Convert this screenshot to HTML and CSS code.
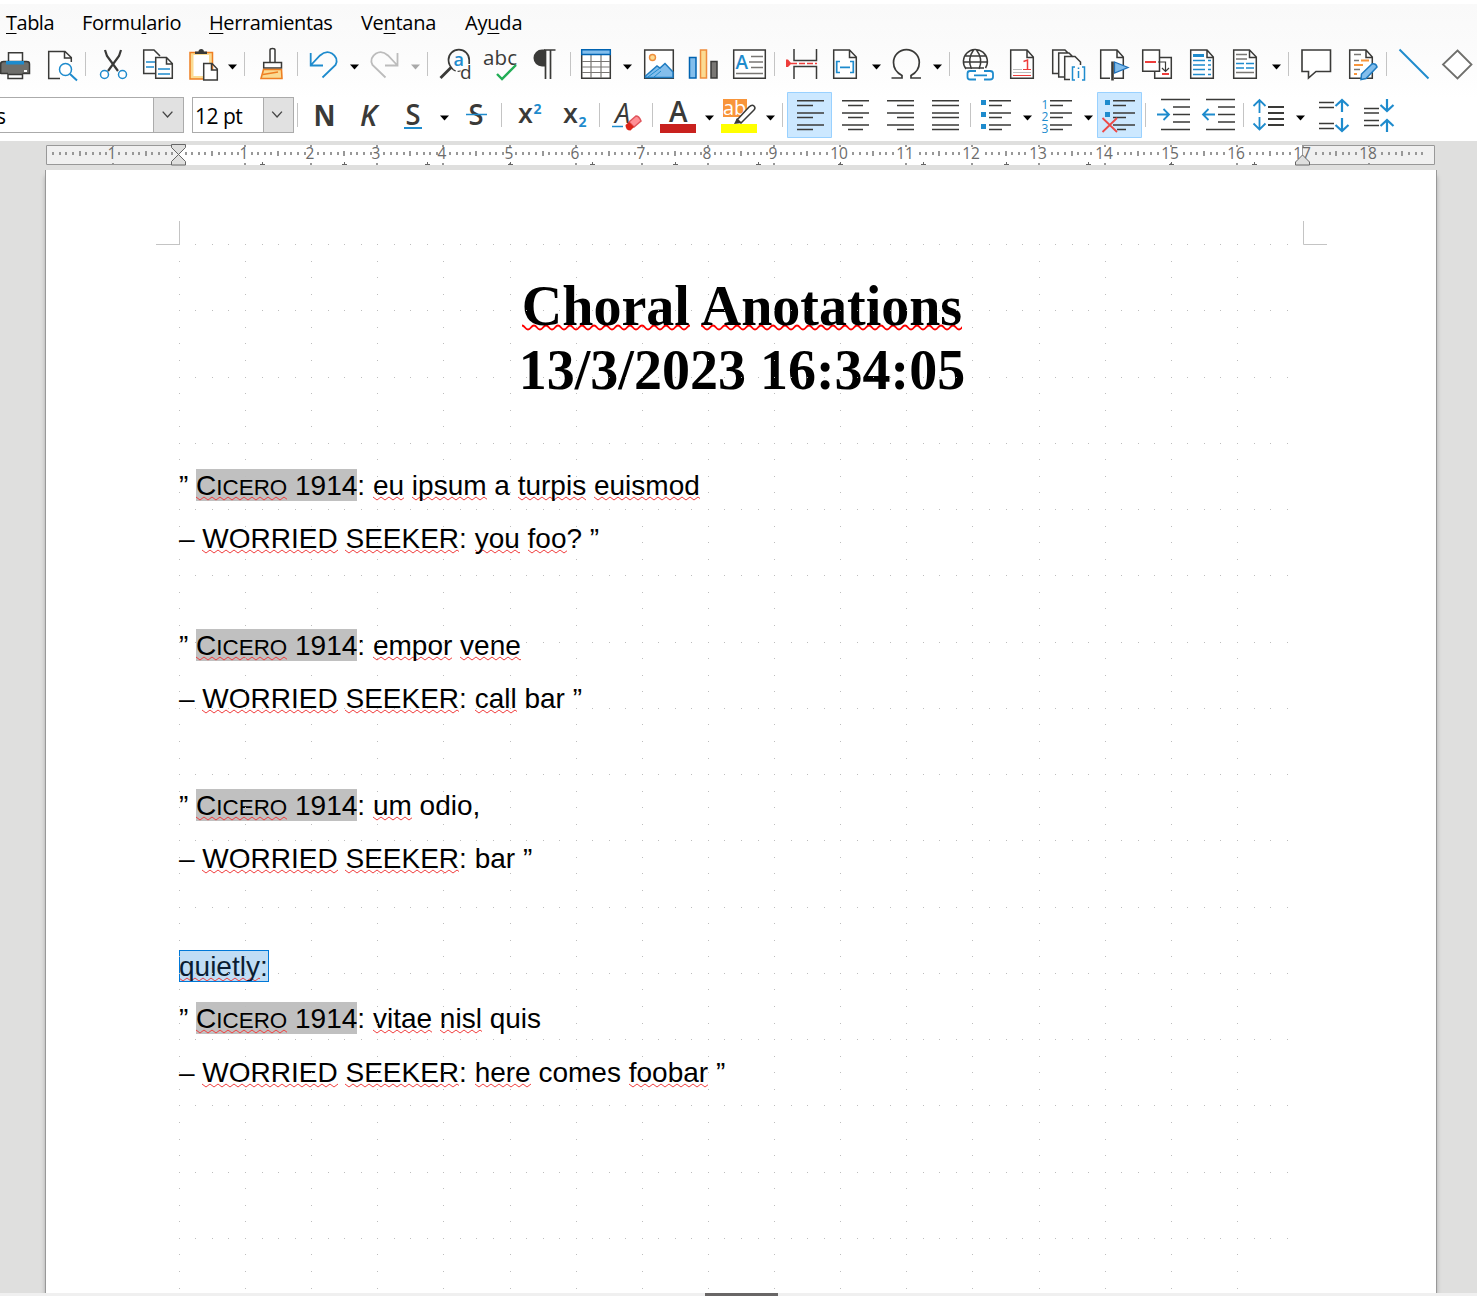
FILE: index.html
```html
<!DOCTYPE html>
<html lang="es">
<head>
<meta charset="utf-8">
<title>Choral Anotations</title>
<link rel="stylesheet" href="styles.css">
</head>
<body>
<div class="app">
<header class="chrome">
<nav class="menu">
<span class="m1"><u>T</u>abla</span><span class="m2">Formu<u>l</u>ario</span><span class="m3"><u>H</u>erramientas</span><span class="m4">Ve<u>n</u>tana</span><span class="m5">Ay<u>u</u>da</span>
</nav>
<div class="bar standard">
<svg class="ic" viewBox="-9 42 45 44"><path class="k w" d="M8.5 62V52.7H22.5V62"/><path d="M0 64q0-3 3-3H27q3 0 3 3V74H0z" fill="#6f6f6c"/><path class="k" d="M.7 74V64q0-2.5 3-2.5H26.500q3 0 3 2.500V73.500H22.500M.7 73.500H8"/><path d="M6 61H24V64.500H6z" fill="#1e8bcd"/><path class="k w" d="M8 74.500V78.500H22.500V74.500z"/><path d="M24 70h3v2h-3z" fill="#fff"/></svg>
<svg class="ic" viewBox="36 42 45 44"><path class="k w" d="M60 78.500H48.700V51.500H65L71.300 57.500V62M64.500 51.500V58H71"/><circle class="b w" cx="65.500" cy="69.500" r="6"/><path class="b" d="M70 74l7 6.500" stroke-width="2"/></svg>
<i class="sep"></i>
<svg class="ic" viewBox="89 42 45 44"><path class="k" stroke-width="2.200" d="M105 50l2 6 11 15M121 50l-2 6-11 15"/><circle class="b w" cx="104.500" cy="74.500" r="4"/><circle class="b w" cx="122.500" cy="74.500" r="4"/></svg>
<svg class="ic" viewBox="134 42 45 44"><path class="k w" d="M155 73.500H143.700V50H154L160 56"/><path class="k w" d="M155.700 57.500H166.500L172.300 63.500V78.300H155.700zM166.500 57.500V64H172"/><path class="b" d="M146 62H155M146 67H154M158 69H170M158 74H170" stroke-width="1.600"/></svg>
<svg class="ic" viewBox="179 42 45 44"><path d="M190 52.500H212.500V79H190z" fill="#fbdb92" stroke="#ee7f22" stroke-width="1.500"/><path fill="#fff" d="M193.500 55H209V76H193.500z"/><path d="M195 54V51.500H198.500q0-2.500 2.700-2.500t2.700 2.500H207V54z" fill="#3a3a38"/><path class="k w" d="M203.700 63.500H212L217.300 69V80H203.700zM211.500 63.500V70H217"/></svg>
<svg class="ca" viewBox="0 0 16 44"><path d="M4 22.500H13L8.500 27.500z"/></svg>
<i class="sep"></i>
<svg class="ic" viewBox="248 42 45 44"><path class="k w" d="M270 62V50q0-1.500 2.500-1.500t2.500 1.500V62"/><path class="k w" d="M263.700 68V62.500H281.500V68z"/><path d="M263.500 69.500H281.500L282 78.500H261z" fill="#fbdb92" stroke="#ee7f22" stroke-width="1.600"/><path d="M263 74.500L278 72" stroke="#ee7f22" stroke-width="1.500"/></svg>
<i class="sep"></i>
<svg class="ic" viewBox="301 42 45 44"><path class="b" stroke-width="1.800" d="M310.700 53V65.500H323M311 65L320 55.500Q326 50 332 53.500Q339 58 335.500 65L322.500 77.500"/></svg>
<svg class="ca" viewBox="0 0 16 44"><path d="M4 22.500H13L8.500 27.500z"/></svg>
<svg class="ic" viewBox="362 42 45 44"><path class="g" stroke-width="1.800" d="M397.500 53V65.500H385M397 65L388 55.500Q382 50 376 53.500Q369 58 372.500 65L385.500 77.500"/></svg>
<svg class="ca dim" viewBox="0 0 16 44"><path d="M4 22.500H13L8.500 27.500z"/></svg>
<i class="sep"></i>
<svg class="ic" viewBox="431 42 45 44"><path class="k" stroke-width="1.700" d="M453 69.500Q448.500 65 448.500 60A10.300 10.300 0 0 1 469.200 60V64"/><path class="k" stroke-width="2.800" d="M440.500 78L451 67.500"/><path class="k" stroke-width="1.200" stroke-dasharray="3 2" d="M453 69.500q4 3 8 1"/><text x="453.500" y="66" class="tb md" font-size="18">a</text><text x="460" y="78.500" class="t" font-size="19">d</text></svg>
<svg class="ic" viewBox="476 42 45 44"><text x="483" y="64.500" class="t" font-size="20.500" textLength="34">abc</text><path d="M497 74l5 5 14-14" fill="none" stroke="#22ad55" stroke-width="2.400"/></svg>
<svg class="ic" viewBox="521 42 45 44"><path d="M544 50H555.500M545.500 50V79M550.500 50V79" stroke="#3a3a38" stroke-width="1.700" fill="none"/><path d="M545 49.500H542a8.500 8.500 0 0 0 0 17h3z" fill="#3a3a38"/></svg>
<i class="sep"></i>
<svg class="ic" viewBox="574 42 45 44"><path class="k w" d="M581.700 50H610.300V78.300H581.700z"/><path class="gr" stroke-width="1.200" d="M591 55V78M601 55V78M582 61.500H610M582 67H610M582 72.500H610"/><path d="M581.700 49.700H610.300V54.500H581.700z" fill="#83beec" stroke="#0063b1" stroke-width="1.400"/></svg>
<svg class="ca" viewBox="0 0 16 44"><path d="M4 22.500H13L8.500 27.500z"/></svg>
<svg class="ic" viewBox="635 42 45 44"><path class="k w" d="M644.700 50H673.300V78.300H644.700z"/><path d="M645.500 77.500V76L657 66l3 2 5-4.500 8 8.500V77.500z" fill="#83beec" stroke="#1e7bc0"/><path class="b" stroke-width="1" d="M648 77l12-9M654 77l7-6"/><circle cx="652.500" cy="57.500" r="3" fill="#fbdb92" stroke="#ee8d3c" stroke-width="1.400"/></svg>
<svg class="ic" viewBox="680 42 45 44"><path d="M689.500 57.500h6.500V78h-6.500z" fill="#83beec" stroke="#0063b1" stroke-width="1.500"/><path d="M700.500 50h6V78h-6z" fill="#fbdb92" stroke="#ee8d3c" stroke-width="1.500"/><path d="M711 61.500h6V78h-6z" fill="#797774" stroke="#3a3a38" stroke-width="1.500"/></svg>
<svg class="ic" viewBox="725 42 45 44"><path class="k w" d="M733.700 50H765.300V78.300H733.700z"/><path class="gr" stroke-width="1.700" d="M751 56.500H763M749 62H763M751 67.500H763M736 73.500H763"/><text x="735.500" y="69" class="tb md" font-size="19">A</text></svg>
<i class="sep"></i>
<svg class="ic" viewBox="778 42 45 44"><path class="k" d="M794 49V60.500H816.500V49M794 79V66.500H816.500V79"/><path d="M786 59.500h2L791.500 63.500L788 67h-2z" fill="#ed3d3b"/><path d="M791 63.500H817" stroke="#ed3d3b" stroke-width="1.400" stroke-dasharray="6 2"/></svg>
<svg class="ic" viewBox="823 42 45 44"><path class="k w" d="M833.700 50H849.500L856.300 57V78.300H833.700zM849.500 50V57.500H856"/><path class="b" stroke-width="1.700" d="M840 61.500H836.700V72.500H840M850 61.500H853.300V72.500H850M840 67.300H850"/></svg>
<svg class="ca" viewBox="0 0 16 44"><path d="M4 22.500H13L8.500 27.500z"/></svg>
<svg class="ic" viewBox="884 42 45 44"><path class="k" stroke-width="1.700" d="M891.500 78H902V75.500Q893.500 71 893.500 62.500A12.700 12.700 0 0 1 919.300 62.500Q919.300 71 911 75.500V78H921"/></svg>
<svg class="ca" viewBox="0 0 16 44"><path d="M4 22.500H13L8.500 27.500z"/></svg>
<i class="sep"></i>
<svg class="ic" viewBox="953 42 45 44"><path class="k" d="M966 69a12 12 0 1 1 19.500 -1M963 62H987.500M965 56H985.500M965 68H984M971.500 69Q967 59 973.500 50M979 69Q983.500 59 976.500 50"/><path fill="#fff" d="M966 69.500H995V82H966z"/><path class="b" stroke-width="1.800" d="M976 71H970q-2.500 0-2.500 2.500V77q0 2.500 2.500 2.500H976M984 71H990q3 0 3 2.500V77q0 2.500-3 2.500H984M974 75.300H987"/></svg>
<svg class="ic" viewBox="998 42 45 44"><path class="k w" d="M1010.700 50H1027L1033.300 57V78.300H1010.700zM1027 50V57.500H1033"/><path class="g" stroke-width="1.200" d="M1013 69.500H1022M1013 72.500H1031"/><path d="M1013 75.500H1031M1023 69.500H1031" stroke="#ed3d3b" stroke-width="1.200"/><path d="M1023.500 61.500l4-1.500V69" stroke="#ed3d3b" stroke-width="1.500" fill="none"/></svg>
<svg class="ic" viewBox="1043 42 45 44"><path class="k" d="M1058 73.500H1052.700V50H1065L1068 53M1064 77H1058.700V53H1069L1073 57M1070 79.500H1064.700V56.500H1075L1080.500 62V65"/><path class="b" d="M1075 67H1072.500V80H1075M1082 67H1084.500V80H1082"/><path class="b" d="M1078.500 67.500v1.500M1078.500 71V78"/></svg>
<svg class="ic" viewBox="1088 42 45 44"><path class="k w" d="M1110 78.300H1100.700V50H1117L1123.300 57V78.300H1114M1117 50V57.500H1123"/><path d="M1114.500 62L1128 67.500L1114.500 73z" fill="#83beec" stroke="#1e6fb8" stroke-width="1.300"/><path class="k" stroke-width="2.600" d="M1112.500 61.500V80.500"/></svg>
<svg class="ic" viewBox="1133 42 45 44"><path class="k w" d="M1154.700 57.500H1171.300V78.300H1154.700z"/><path class="k w" d="M1142.700 50H1159.500V71.300H1142.700z"/><path d="M1145 62H1156M1162 74H1169" stroke="#ed3d3b" stroke-width="2"/><path class="k" stroke-width="1.200" d="M1158 62H1165.500V71.500M1162 68l3.500 3.500 3.500-3.500"/></svg>
<svg class="ic" viewBox="1178 42 45 44"><path class="k w" d="M1190.700 50H1207L1213.300 57V78.300H1190.700zM1207 50V57.500H1213"/><path d="M1193 54h11v3h-11z" fill="#1e8bcd"/><path class="b" stroke-width="1.700" d="M1193 60.500H1205M1208 60.500H1211M1193 65H1205M1208 65H1211M1193 69.500H1205M1208 69.500H1211M1193 74.500H1205M1208 74.500H1211"/></svg>
<svg class="ic" viewBox="1223 42 45 44"><path class="k w" d="M1233.700 50H1249.500L1256.300 57V78.300H1233.700zM1249.500 50V57.500H1256"/><path class="gr" stroke-width="1.300" d="M1236 54.500H1247M1236 59H1247M1236 72.500H1254"/><path class="b" stroke-width="1.700" d="M1236 63.500H1244M1246 63.500H1254M1236 68H1244M1246 68H1254"/></svg>
<svg class="ca" viewBox="0 0 16 44"><path d="M4 22.500H13L8.500 27.500z"/></svg>
<i class="sep"></i>
<svg class="ic" viewBox="1292 42 45 44"><path class="k w" stroke-width="1.600" d="M1302 50H1330.500V71.500H1316L1308.500 78V71.500H1302z"/></svg>
<svg class="ic" viewBox="1337 42 45 44"><path class="k w" d="M1349.700 50H1366L1372.300 57V78.300H1349.700zM1366 50V57.500H1372"/><path d="M1361 60.500H1369M1354 65H1363M1354 74H1357" stroke="#f8953b" stroke-width="1.800"/><path class="gr" d="M1354 54.500H1361M1354 60.500H1359M1354 69.500H1360"/><path d="M1361 79.500L1361.500 74 1372 64Q1376 63 1377 67L1366 78.500z" fill="#83beec" stroke="#1e7bc0"/></svg>
<i class="sep"></i>
<svg class="ic" viewBox="1390 42 45 44"><path class="b" stroke-width="1.900" d="M1399.500 49.500L1428.500 78.500"/></svg>
<svg class="ic" viewBox="1435 42 45 44"><path stroke="#6f6f6c" fill="#fff" stroke-width="1.800" d="M1457.500 50.500L1471.500 64.500L1457.500 78.500L1443 64.500z"/></svg>
</div>
<div class="bar format">
<div class="combo style"><span>s</span><b><svg viewBox="0 0 30 35"><path d="M8.500 14l5 5.500 5-5.500"/></svg></b></div>
<div class="combo size"><span>12 pt</span><b><svg viewBox="0 0 30 35"><path d="M8 14l5 5.500 5-5.500"/></svg></b></div>
<i class="sep"></i>
<svg class="ic" viewBox="301 90 45 50"><text x="313.500" y="126" class="t n" font-size="29" textLength="22" lengthAdjust="spacingAndGlyphs">N</text></svg>
<svg class="ic" viewBox="346 90 45 50"><text x="360" y="126" class="t it md" font-size="28" textLength="17" lengthAdjust="spacingAndGlyphs">K</text></svg>
<svg class="ic" viewBox="391 90 45 50"><text x="405.500" y="125" class="t md" font-size="28" textLength="15" lengthAdjust="spacingAndGlyphs">S</text><path class="b" stroke-width="2" d="M404 128H422"/></svg>
<svg class="ca" viewBox="0 0 16 50"><path d="M4 25.500H13L8.500 30.500z"/></svg>
<svg class="ic" viewBox="452 90 45 50"><text x="468.500" y="125" class="t md" font-size="28" textLength="15" lengthAdjust="spacingAndGlyphs">S</text><path class="b" d="M466 114.500H487"/></svg>
<i class="sep"></i>
<svg class="ic" viewBox="505 90 45 50"><text x="518" y="123" class="t md" font-size="27">x</text><text x="533.500" y="114" class="tb bd" font-size="14">2</text></svg>
<svg class="ic" viewBox="550 90 45 50"><text x="563" y="123" class="t md" font-size="27">x</text><text x="578.500" y="127" class="tb bd" font-size="14">2</text></svg>
<i class="sep"></i>
<svg class="ic" viewBox="603 90 45 50"><text x="615" y="123" class="t it" font-size="27">A</text><path class="b" d="M612 126.500H623"/><path d="M629 122l7-6q3 0 5 5l-7 6z" fill="#ff8f95" stroke="#e0555c"/><path d="M625.500 125l3.500-3 5 5-3.500 3.500q-5 0-5-5.500z" fill="#dc2418"/></svg>
<i class="sep"></i>
<svg class="ic" viewBox="656 90 45 50"><text x="669" y="122" class="t md" font-size="28">A</text><path d="M660 124H696V133H660z" fill="#c9211e"/></svg>
<svg class="ca" viewBox="0 0 16 50"><path d="M4 25.500H13L8.500 30.500z"/></svg>
<svg class="ic" viewBox="717 90 45 50"><path d="M723 99H747V117H723z" fill="#f8953b"/><text x="723" y="115" font-size="20" fill="#fff">ab</text><path d="M721 124H757V133H721z" fill="#ff0"/><path d="M737 120l12-13q3-3 5-1t0 4L741 123z" class="k w"/><path d="M734 124l3-6 5 5z" fill="#3a3a38"/></svg>
<svg class="ca" viewBox="0 0 16 50"><path d="M4 25.500H13L8.500 30.500z"/></svg>
<i class="sep"></i>
<svg class="ic" viewBox="786 90 45 50"><path class="on" d="M787.500 92.500H831.500V137.500H787.500z"/><path class="k" d="M797 100.700H824M797 105.500H813M797 113H824M797 117.500H813M797 125H824M797 129.500H813"/></svg>
<svg class="ic" viewBox="831 90 45 50"><path class="k" d="M842 100.700H869M848 105.500H863M842 113H869M848 117.500H863M842 125H869M848 129.500H863"/></svg>
<svg class="ic" viewBox="876 90 45 50"><path class="k" d="M887 100.700H914M897 105.500H914M887 113H914M897 117.500H914M887 125H914M897 129.500H914"/></svg>
<svg class="ic" viewBox="921 90 45 50"><path class="k" d="M932 100.700H959M932 105.500H959M932 113H959M932 117.500H959M932 125H959M932 129.500H959"/></svg>
<i class="sep"></i>
<svg class="ic" viewBox="974 90 45 50"><path class="k" d="M989 100.700H1011M989 105.500H1002M989 113H1011M989 117.500H1002M989 125H1011M989 129.500H1002"/><path class="b" stroke-width="5" stroke-dasharray="5 7" d="M983.500 100V130"/></svg>
<svg class="ca" viewBox="0 0 16 50"><path d="M4 25.500H13L8.500 30.500z"/></svg>
<svg class="ic" viewBox="1035 90 45 50"><path class="k" d="M1050 100.700H1072M1050 105.500H1063M1050 113H1072M1050 117.500H1063M1050 125H1072M1050 129.500H1063"/><text x="1041.500" y="109" class="tb" font-size="12">1</text><text x="1041.500" y="121" class="tb" font-size="12">2</text><text x="1041.500" y="133" class="tb" font-size="12">3</text></svg>
<svg class="ca" viewBox="0 0 16 50"><path d="M4 25.500H13L8.500 30.500z"/></svg>
<svg class="ic" viewBox="1096 90 45 50"><path class="on" d="M1097.500 92.500H1141.500V137.500H1097.500z"/><path class="k" d="M1113 100.700H1135M1113 105.500H1126M1113 113H1135M1113 117.500H1126M1113 125H1135M1117 129.500H1126"/><path class="b" stroke-width="5" stroke-dasharray="5 7" d="M1107.500 100V118"/><path d="M1102.500 118L1117 132M1117 118L1102.500 132" stroke="#ec4a48" stroke-width="1.800"/></svg>
<i class="sep"></i>
<svg class="ic" viewBox="1149 90 45 50"><path class="k" d="M1161 99.500H1190M1173 107H1190M1173 114.500H1190M1173 122H1190M1161 129.500H1190"/><path class="b" stroke-width="1.800" d="M1157 114.500H1169M1163.500 109l5.500 5.500-5.500 5.500"/></svg>
<svg class="ic" viewBox="1194 90 45 50"><path class="k" d="M1206 99.500H1235M1218 107H1235M1218 114.500H1235M1218 122H1235M1206 129.500H1235"/><path class="b" stroke-width="1.800" d="M1215 114.500H1203M1208.500 109l-5.500 5.500 5.500 5.500"/></svg>
<i class="sep"></i>
<svg class="ic" viewBox="1247 90 45 50"><path class="k" stroke-width="1.800" d="M1268 107H1284M1268 113H1284M1268 119H1284M1268 125H1284"/><path class="b" stroke-width="1.800" d="M1259.500 113V100M1253.500 106l6-6 6 6M1259.500 117V129.500M1253.500 123.500l6 6 6-6"/></svg>
<svg class="ca" viewBox="0 0 16 50"><path d="M4 25.500H13L8.500 30.500z"/></svg>
<svg class="ic" viewBox="1308 90 45 50"><path class="k" d="M1319 102.500H1334M1319 107.500H1334M1319 123.500H1334M1319 128.500H1334"/><path class="b" stroke-width="2.200" d="M1342 112V100M1335.500 106l6.500-6 6.500 6M1342 118V131M1335.500 125l6.500 6 6.500-6"/></svg>
<svg class="ic" viewBox="1353 90 45 50"><path class="k" d="M1364 108.500H1379M1364 113H1379M1364 120.500H1379M1364 125.500H1379"/><path class="b" stroke-width="2.200" d="M1387 99V111M1380.500 105l6.500 6 6.500-6M1387 132V120M1380.500 126l6.500-6 6.500 6"/></svg>
</div>
</header>
<div class="rulerarea"><svg id="ruler" class="ruler" viewBox="0 141 1477 29"></svg></div>
<main class="desk">
<article class="page">
<h1><span class="wv">Choral</span> <span class="wv">Anotations</span><br>13/3/2023 16:34:05</h1>
<section class="text">
<p>” <mark><span class="sp">C<small>ICERO</small></span> 1914</mark>: <span class="sp">eu</span> <span class="sp">ipsum</span> a <span class="sp">turpis</span> <span class="sp">euismod</span></p>
<p>– <span class="sp">WORRIED</span> <span class="sp">SEEKER</span>: <span class="sp">you</span> <span class="sp">foo</span>? ”</p>
<p></p>
<p>” <mark><span class="sp">C<small>ICERO</small></span> 1914</mark>: <span class="sp">empor</span> <span class="sp">vene</span></p>
<p>– <span class="sp">WORRIED</span> <span class="sp">SEEKER</span>: <span class="sp">call</span> bar ”</p>
<p></p>
<p>” <mark><span class="sp">C<small>ICERO</small></span> 1914</mark>: <span class="sp">um</span> odio,</p>
<p>– <span class="sp">WORRIED</span> <span class="sp">SEEKER</span>: bar ”</p>
<p></p>
<p class="cue"><span class="selected"><span class="sp">quietly</span>:</span></p>
<p>” <mark><span class="sp">C<small>ICERO</small></span> 1914</mark>: <span class="sp">vitae</span> <span class="sp">nisl</span> quis</p>
<p>– <span class="sp">WORRIED</span> <span class="sp">SEEKER</span>: <span class="sp">here</span> comes <span class="sp">foobar</span> ”</p>
</section>
<svg id="grid" class="grid" viewBox="46 170 1390 1123"></svg>
</article>
</main>
<footer class="foot"><span></span></footer>
</div>
<script src="page.js"></script>
</body>
</html>
```
FILE: styles.css
```css
* { box-sizing: border-box; }
body { margin: 0; overflow: hidden; background: #dfdfde; }
.app { display: flex; flex-direction: column; width: 1477px; height: 1296px; overflow: hidden; font-family: "Open Sans", "Noto Sans", sans-serif; }
.chrome { flex: 0 0 141px; overflow: hidden; border-top: 4px solid #fff; background: linear-gradient(#f9f9f9, #fbfbfb 40px, #fff 95px); }
.menu { display: flex; height: 38px; padding-left: 6px; font-size: 20px; line-height: 37px; color: #000; white-space: nowrap; }
.menu u { text-decoration-thickness: 1px; text-underline-offset: 3px; }
.m1 { width: 76px; letter-spacing: -.5px; }
.m2 { width: 127px; letter-spacing: -.35px; }
.m3 { width: 152px; letter-spacing: -.4px; }
.m4 { width: 104px; letter-spacing: -.3px; }
.m5 { letter-spacing: -.2px; }
.bar { display: flex; }
.standard { height: 44px; margin-left: -9px; }
.format { height: 50px; margin-top: 4px; }
.ic { flex: 0 0 45px; width: 45px; height: 100%; overflow: visible; stroke-width: 1.5; }
.ca { flex: 0 0 16px; width: 16px; height: 100%; }
.dim { fill: #a9a9a9; }
.sep { flex: 0 0 1px; height: 24px; margin: 10px 3px 0 4px; background: #c4c4c4; }
.format .sep { margin-top: 13px; }
.k, .b, .g, .gr { fill: none; }
.k { stroke: #3a3a38; }
.b { stroke: #1e8bcd; }
.g { stroke: #bcbcbc; }
.gr { stroke: #797774; }
.w { fill: #fff; }
.on { fill: #cce8ff; stroke: #99d1ff; stroke-width: 1; }
.t { fill: #3a3a38; }
.tb { fill: #1e8bcd; }
.n, .bd { font-weight: 700; }
.md { font-weight: 600; }
.it { font-style: italic; }
.combo { display: flex; height: 36px; margin-top: 7px; border: 1px solid #ababab; background: #fff; font-size: 21px; line-height: 37px; }
.combo b { width: 30px; border-left: 1px solid #ababab; background: #e1e1e1; }
.combo svg { display: block; width: 30px; height: 34px; fill: none; stroke: #444; stroke-width: 1.4; }
.combo span { flex: 1; }
.style { width: 184px; border-left: 0; }
.style span { margin-left: -4px; }
.size { width: 102px; margin-left: 8px; margin-right: -1px; }
.size span { padding-left: 2px; letter-spacing: -.5px; }
.rulerarea { flex: 0 0 29px; background: #dfdfde; }
.ruler { display: block; width: 1477px; height: 29px; font-size: 15.5px; }
.ruler text { fill: #6b6b6b; text-anchor: middle; }
.desk { flex: 1; display: flex; min-height: 0; overflow: hidden; padding-left: 45px; background: #dfdfde; }
.page { position: relative; width: 1392px; border: solid #989898; border-width: 0 1px; background: #fff; box-shadow: 0 6px 4px #aaa; color: #000; }
.grid { position: absolute; left: 0; top: 0; width: 1390px; height: 1123px; }
h1 { margin: 0; padding: 104px 0 0 2px; text-align: center; font: 700 56px/64.4px "Liberation Serif", serif; }
.wv, .sp { background-repeat: repeat-x; }
.wv { background-image: url("data:image/svg+xml,%3Csvg xmlns='http://www.w3.org/2000/svg' width='12' height='7'%3E%3Cpath d='M-3 3.500Q0 -.5 3 3.500T9 3.500T15 3.500' fill='none' stroke='red' stroke-width='1.800'/%3E%3C/svg%3E"); background-position: 0 49px; }
.text { padding: 56px 0 0 133px; font: 28px/53.350px "Liberation Sans", sans-serif; }
.text p { margin: 0; height: 53.350px; white-space: pre; }
.text .cue { padding-top: 1px; }
.text mark { padding-top: 1px; background: #c0c0c0; color: #000; }
.text small { font-size: 22.400px; }
.sp { background-image: url("data:image/svg+xml,%3Csvg xmlns='http://www.w3.org/2000/svg' width='8' height='5'%3E%3Cpath d='M0 1L4 4L8 1' fill='none' stroke='%23f04040' stroke-width='1'/%3E%3C/svg%3E"); background-position: 0 26px; }
.selected { padding: 1px 1px 0 0; outline: 1px solid #0078d7; outline-offset: -1px; background: #c0ddf5; color: #0b1d33; }
.foot { flex: 0 0 3px; background: #f0f0f0; }
.foot span { display: block; width: 73px; height: 3px; margin-left: 705px; background: #686666; }
```
FILE: page.js
```js
const CM_X = 66.13, ORIGIN = 178.9;

// Snap grid: dots every quarter centimetre along each centimetre line pair.
let dots = '';
for (let j = 0; j < 64; j++) {
  for (let i = 0; i < 68; i++) {
    if (i % 4 && j % 4) continue;
    dots += `M${Math.round(ORIGIN + i * CM_X / 4)} ${Math.round(244 + j * 16.565)}h1v1h-1z`;
  }
}
document.getElementById('grid').innerHTML =
  `<path d="${dots}" fill="#bdbdbd"/>` +
  '<path d="M179.500 221V244.500H156M1303.500 221V244.500H1327" fill="none" stroke="#c4c4c4"/>';

// Ruler: margins, tenth ticks, numbers, default tab stops and indent handles.
let ticks = '', labels = '', tabs = '';
for (let n = -19; n <= 189; n++) {
  const x = Math.round(ORIGIN - 1 + n * CM_X / 10);
  if (n % 10 === 0) {
    if (!n) continue;
    const cm = Math.abs(n / 10);
    ticks += `M${x} 145h2v2h-2zM${x} 163h2v2h-2z`;
    labels += `<text x="${x}" y="159">${cm}</text>`;
  } else if (!(n > 95 && (n % 10 === 1 || n % 10 === 9))) {
    ticks += n % 5 === 0 ? `M${x} 151h2v5h-2z` : `M${x} 152h2v3h-2z`;
  }
}
for (let t = 1; t <= 13; t++) {
  const x = Math.round(ORIGIN + t * 1.25 * CM_X);
  tabs += `M${x - 2} 164.500h5M${x + .5} 162v3`;
}
document.getElementById('ruler').innerHTML =
  '<path d="M46 145H1435V165H46z" fill="#fff"/>' +
  '<path d="M46.500 145.500H178.500V164.500H46.500zM1302.500 145.500H1434.500V164.500H1302.500z" fill="#f0f0f0" stroke="#989898"/>' +
  `<path d="${ticks}" fill="#989898"/>${labels}<path d="${tabs}" stroke="#666"/>` +
  '<path d="M171.500 144.500H185.500V147.500L171.500 161.500V165H185.500V161.500L171.500 147.500z" fill="#dfdfde" stroke="#666"/>' +
  '<path d="M1295.500 165V162L1302.500 155L1309.500 162V165z" fill="#dfdfde" stroke="#666"/>';
```
